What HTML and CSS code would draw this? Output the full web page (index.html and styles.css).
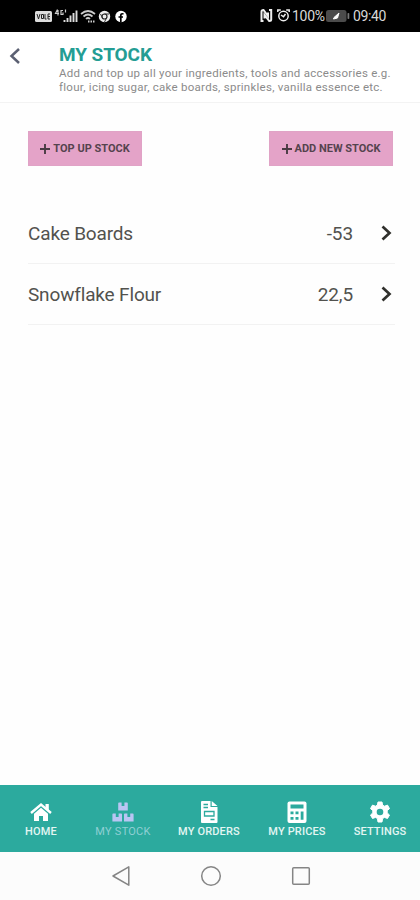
FILE: index.html
```
<!DOCTYPE html>
<html lang="en">
<head>
<meta charset="utf-8">
<title>My Stock</title>
<link rel="stylesheet" href="styles.css">
</head>
<body>
<div class="status">
  <div class="status-left">
    <svg width="94" height="18" viewBox="0 0 94 18" fill="none">
      <rect x="1" y="3" width="17" height="11" rx="1.500" fill="#ddd"/>
      <path d="M3 6l1.500 5L6 6M7.500 6.500h2v4h-2zM11 6v5h1.500M14 6v5M16 6h-2M16 11h-2M16 8.500h-2" stroke="#222" stroke-width="1"/>
      <path d="M23.500 1.500l-2 4h3.500M24 2v5.500M29 2.500h-2v4h2V4.500M31.500 1.500v3" stroke="#ccc" stroke-width="1.200"/>
      <path d="M30.500 14v-2M33.500 14v-4M36.500 14V7.500M39.500 14V5M42.500 14V2.500" stroke="#ddd" stroke-width="1.900"/>
      <path d="M47 6q7-6 14 0M49.500 8.500q4.500-4 9 0M52 11q2-2 4 0" stroke="#ccc" stroke-width="1.700"/>
      <path d="M54 13.500h7" stroke="#ccc" stroke-width="1.800" stroke-dasharray="1.500 1"/>
      <circle cx="70.500" cy="8.500" r="5.700" fill="#eee"/>
      <circle cx="70.500" cy="8.500" r="2.500" stroke="#222" stroke-width="1.200"/>
      <path d="M70.500 6h4.500M68.500 10l-2-4M72.500 10l-2 4" stroke="#333"/>
      <circle cx="87" cy="8.500" r="5.700" fill="#fff"/>
      <path d="M86.800 14.500V7.500q0-2 2.700-1.700M84.500 9h4.500" stroke="#000" stroke-width="1.700"/>
    </svg>
  </div>
  <div class="status-right">
    <svg width="30" height="18" viewBox="0 0 30 18" fill="none" stroke="#eee">
      <path d="M3.500 14H1.500V4.500q0-1.500 2-1.500L8 9V5.500M9 3h2.200v9.500q0 1.500-2 1.500L4.500 8v3.500" stroke-width="2"/>
      <circle cx="23.500" cy="9" r="4.700" stroke-width="1.500"/>
      <path d="M17.800 5V3h3M29.200 5V3h-3M21 8l2.500 1.800L25.500 7" stroke-width="1.500"/>
    </svg>
    <span class="percent">100%</span>
    <svg class="battery" width="24" height="12" viewBox="0 0 24 12">
      <rect width="20.500" height="12" rx="2.500" fill="#4b4b4b"/>
      <rect x="21.500" y="3" width="1.800" height="6" rx=".8" fill="#777"/>
      <path d="M8 7.500l5-4.500-1.500 5L7.500 9z" fill="#fff" stroke="#fff"/>
    </svg>
    <span class="clock">09:40</span>
  </div>
</div>
<header class="header">
  <svg class="back" width="12" height="18" viewBox="0 0 12 18" fill="none" stroke="#5b6072" stroke-width="2.500"><path d="M10 2L2.500 9l7.500 7"/></svg>
  <div class="heading">
    <h1>MY STOCK</h1>
    <p>Add and top up all your ingredients, tools and accessories e.g.</p>
    <p>flour, icing sugar, cake boards, sprinkles, vanilla essence etc.</p>
  </div>
</header>
<main class="content">
  <div class="actions">
    <button class="top-up"><svg width="10" height="10" viewBox="0 0 10 10"><path d="M5 0v10M0 5h10" stroke="#493b43" stroke-width="1.900"/></svg><span>TOP UP STOCK</span></button>
    <button class="add-new"><svg width="10" height="10" viewBox="0 0 10 10"><path d="M5 0v10M0 5h10" stroke="#493b43" stroke-width="1.900"/></svg><span>ADD NEW STOCK</span></button>
  </div>
  <ul class="stock">
    <li><span class="name">Cake Boards</span><span class="qty">-53</span><svg width="12" height="16" viewBox="0 0 12 16" fill="none" stroke="#30302c" stroke-width="2.700"><path d="M1.500 1.500L8.500 8l-7 6.500"/></svg></li>
    <li><span class="name">Snowflake Flour</span><span class="qty">22,5</span><svg width="12" height="16" viewBox="0 0 12 16" fill="none" stroke="#30302c" stroke-width="2.700"><path d="M1.500 1.500L8.500 8l-7 6.500"/></svg></li>
  </ul>
</main>
<nav class="tabs">
  <a class="tab">
    <svg width="24" height="24" viewBox="0 0 24 24"><path d="M2 13L12 4.500l10 8.500" fill="none" stroke="#fff" stroke-width="2.400"/><path d="M16.500 4h3.300v6.500l-3.300-2.800zM5 13.800l7-6 7 6V21h-5v-5h-4v5H5z" fill="#fff"/></svg>
    <span>HOME</span>
  </a>
  <a class="tab active">
    <svg width="24" height="24" viewBox="0 0 24 24" fill="#b9c5f3"><path d="M8 2.500h2.600v3.500h2.800V2.500H16q.8 0 .8.800v7.200H7.200V3.300q0-.8.800-.8zM2.200 13.500h2.600V17h2.800v-3.500h2.600q.8 0 .8.800v7.200H1.400v-7.200q0-.8.800-.8zM13.800 13.500h2.600V17h2.800v-3.500h2.600q.8 0 .8.800v7.200H13v-7.200q0-.8.800-.8z"/></svg>
    <span>MY STOCK</span>
  </a>
  <a class="tab">
    <svg width="24" height="24" viewBox="0 0 24 24"><path d="M5 1h8.500v6H20.500V22q0 1-1 1H5q-1 0-1-1V2q0-1 1-1zM14.700 1l5.800 5h-5.800z" fill="#fff"/><path d="M6.500 4.500h4.500M6.500 7.500h4.500M13.500 19.500h4M7.500 11.500h9.500v4.500H7.500z" fill="none" stroke="#2caa9e" stroke-width="1.300"/></svg>
    <span>MY ORDERS</span>
  </a>
  <a class="tab">
    <svg width="24" height="24" viewBox="0 0 24 24"><rect x="2.500" y="1.500" width="19" height="21.500" rx="2" fill="#fff"/><path d="M5.500 4.500h13v4h-13zM5.500 11.500h3v2.800h-3zM10.500 11.500h3v2.800h-3zM5.500 17h3v2.800h-3zM10.500 17h3v2.800h-3zM15.700 11.500h2.800v8.300h-2.800z" fill="#2caa9e"/></svg>
    <span>MY PRICES</span>
  </a>
  <a class="tab">
    <svg width="24" height="24" viewBox="0 0 24 24"><path d="M10 2h4l.6 3.100 1.900 1.100 3-1.100 2 3.500-2.300 2.100v2.200l2.300 2.100-2 3.500-3-1.100-1.900 1.100L14 22h-4l-.6-3.500-1.900-1.100-3 1.100-2-3.500 2.300-2.100v-2.200L2.500 8.600l2-3.500 3 1.100 1.900-1.100z" fill="#fff" stroke="#fff" stroke-linejoin="round"/><circle cx="12" cy="12" r="3.300" fill="#2caa9e"/></svg>
    <span>SETTINGS</span>
  </a>
</nav>
<div class="system">
  <svg width="20" height="22" viewBox="0 0 20 22"><path d="M17.800 1.800v18.400L2 11z"/></svg>
  <svg width="22" height="22" viewBox="0 0 22 22"><circle cx="11" cy="11" r="9.300"/></svg>
  <svg width="20" height="20" viewBox="0 0 20 20"><rect x="1.700" y="1.700" width="16.600" height="16.600" rx="1"/></svg>
</div>
</body>
</html>
```
FILE: styles.css
```
* { box-sizing: border-box; }
body {
  margin: 0;
  width: 420px;
  height: 900px;
  display: flex;
  flex-direction: column;
  overflow: hidden;
  background: #fefefe;
  font-family: Roboto, "Liberation Sans", sans-serif;
}
svg { display: block; flex: none; }
span, p, h1 { white-space: nowrap; }
.status {
  height: 32px;
  flex: none;
  display: flex;
  justify-content: space-between;
  padding: 0 34px;
  background: #000;
  color: #d8d8d8;
  font-size: 14px;
}
.status-left { padding-top: 8px; }
.status-right {
  display: flex;
  align-items: center;
  width: 126px;
}
.percent { width: 32px; margin-left: 2px; letter-spacing: -.3px; }
.battery { margin-left: 2px; }
.clock { margin-left: 3px; letter-spacing: -.4px; }
.header {
  height: 71px;
  flex: none;
  display: flex;
  align-items: flex-start;
  border-bottom: 1px solid #f3f3f3;
  background: #fff;
}
.back { margin: 15px 0 0 9px; }
.heading { margin: 12px 0 0 38px; }
h1 {
  margin: 0;
  font-size: 19px;
  line-height: 22px;
  font-weight: 700;
  letter-spacing: -.1px;
  color: #249d94;
}
p {
  margin: 0;
  font-size: 11.500px;
  line-height: 14px;
  letter-spacing: .26px;
  color: #8b8b8b;
}
.content { flex: 1; padding: 28px 25px 0 28px; }
.actions {
  display: flex;
  justify-content: space-between;
  padding-right: 2px;
}
button {
  display: flex;
  align-items: center;
  justify-content: center;
  gap: 3px;
  height: 35px;
  padding: 0;
  border: 1px solid #e0a3c6;
  background: #e4a3c8;
  color: #55434e;
  font: 700 11px Roboto, sans-serif;
}
.top-up { width: 114px; }
.add-new { width: 124px; }
.stock { list-style: none; margin: 37px 0 0; padding: 0; }
.stock li {
  display: flex;
  align-items: center;
  height: 61px;
  padding-right: 2px;
  border-bottom: 1px solid #f2f2f2;
  font-size: 19px;
  color: #52524e;
}
.name { letter-spacing: -.16px; }
.qty { margin-left: auto; margin-right: 28px; letter-spacing: -.1px; }
.tabs {
  height: 67px;
  flex: none;
  display: grid;
  grid-template-columns: 82px 82px 90px 86px 80px;
  background: #2caa9e;
  color: #e3f6f3;
}
.tab {
  display: flex;
  flex-direction: column;
  align-items: center;
  padding-top: 15px;
  font-size: 11px;
  line-height: 13px;
  font-weight: 500;
  letter-spacing: .15px;
}
.tab span { margin-top: 1px; }
.active { color: #8fcfd4; font-weight: 400; letter-spacing: .25px; }
.system {
  height: 48px;
  flex: none;
  display: flex;
  align-items: center;
  gap: 69px;
  padding-left: 111px;
  background: #fcfcfc;
}
.system svg { fill: none; stroke: #858585; stroke-width: 1.500; stroke-linejoin: round; }
```
